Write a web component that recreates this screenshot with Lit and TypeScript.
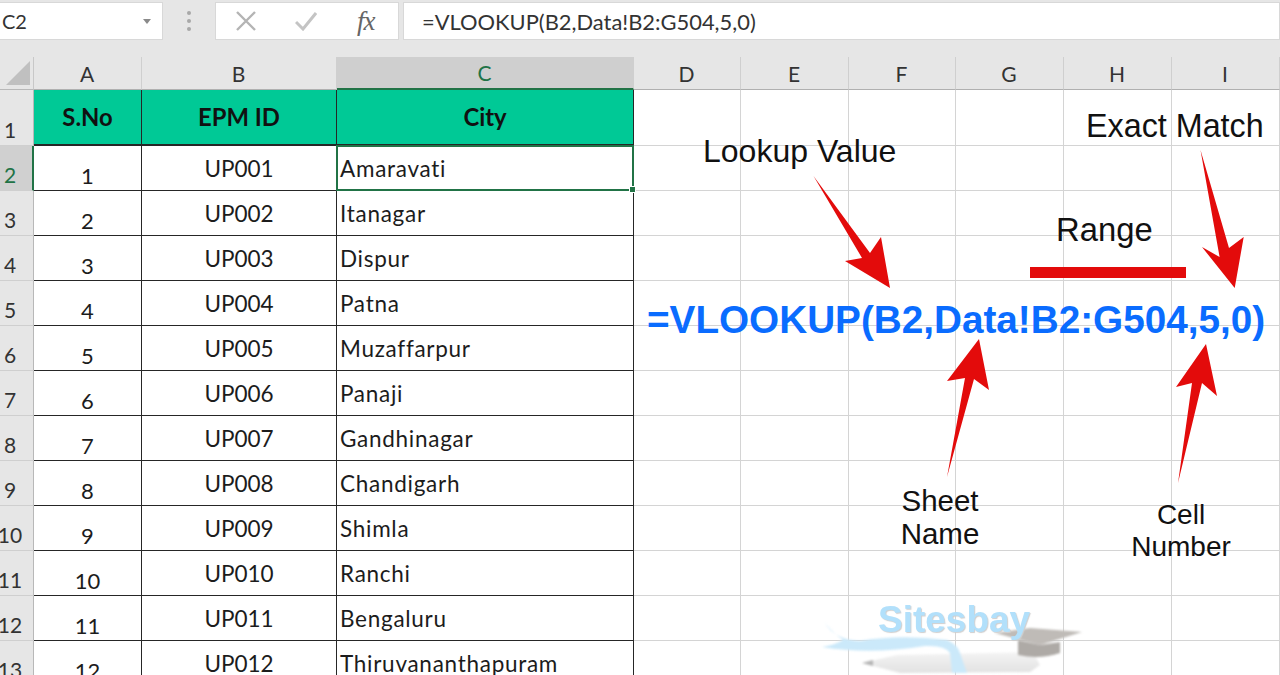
import { LitElement, html, css, svg } from "lit";
import { customElement } from "lit/decorators.js";

const COLS = ["A", "B", "C", "D", "E", "F", "G", "H", "I"];
const CITIES = ["Amaravati", "Itanagar", "Dispur", "Patna", "Muzaffarpur", "Panaji", "Gandhinagar", "Chandigarh", "Shimla", "Ranchi", "Bengaluru", "Thiruvananthapuram"];
const ARROWS = [
  "813.5,176 870,253 881,237 890,288 845,261 862,258",
  "1200.5,150 1229,248 1243.7,237 1234.7,288 1202,247 1219.6,257",
  "947,477 965,378 947,381 979,339 989,390 974,379",
  "1178,483 1192,383 1176,387 1206,344 1217,396 1202,383",
];

@customElement("app-root")
export class AppRoot extends LitElement {
  static styles = css`
    :host { display: block; position: relative; width: 1280px; height: 675px; overflow: hidden; background: #fff; font-family: Lato, "Open Sans", sans-serif; color: #1c1c1c; }
    .bar { display: flex; align-items: center; height: 57px; box-sizing: border-box; padding-bottom: 15px; background: #e6e6e6; }
    .box { height: 38px; box-sizing: border-box; background: #fff; border: 1px solid #d8d8d8; display: flex; align-items: center; }
    .name { width: 164px; margin-left: -1px; padding: 0 11px 0 2px; justify-content: space-between; font-size: 20px; color: #333; }
    .caret { width: 0; height: 0; border: 4px solid transparent; border-top: 5px solid #8a8a8a; border-bottom: 0; }
    .dots { width: 52px; display: flex; flex-direction: column; align-items: center; gap: 4px; }
    .dots i { width: 4px; height: 4px; border-radius: 50%; background: #a8a8a8; }
    .btns { width: 184px; padding-left: 20px; gap: 39px; margin-right: 4px; }
    .btns svg { flex: none; }
    .fx { font: italic 400 27px "Liberation Serif", serif; color: #666; letter-spacing: -1px; margin-left: 1px; }
    .formula { flex: 1; padding-left: 18px; font-size: 21.9px; color: #333; white-space: nowrap; }
    .sheet { display: grid; grid-template-columns: 34px 108px 195px 297px 107px 108px 107px 108px 108px 108px; grid-template-rows: 33px 56px repeat(12, 45px); }
    .corner { background: #e6e6e6; border-right: 1px solid #c8c8c8; border-bottom: 1px solid #b8b8b8; display: flex; align-items: flex-end; justify-content: flex-end; padding: 0 3px 4px 0; }
    .corner svg { display: block; }
    .ch { background: #e6e6e6; border-right: 1px solid #cfcfcf; border-bottom: 1px solid #b0b0b0; display: flex; align-items: center; justify-content: center; padding-right: 1px; font-size: 21px; color: #333; }
    .ch.sel { background: #cfcfcf; color: #217346; border-bottom: 2px solid #217346; }
    .rh { background: #e6e6e6; border-bottom: 1px solid #cfcfcf; border-right: 1px solid #b8b8b8; padding: 0 13px 0 0; display: flex; align-items: flex-end; justify-content: center; font-size: 21px; line-height: 30px; color: #333; }
    .rh.sel { background: #d0d0d0; color: #217346; border-right: 2px solid #217346; padding-right: 12px; }
    .c { box-sizing: border-box; border-right: 1px solid #262626; border-bottom: 1px solid #262626; display: flex; align-items: center; font-size: 22.5px; color: #1c1c1c; white-space: nowrap; }
    .head { background: #00c996; font-weight: 700; justify-content: center; font-size: 23.8px; color: #111; border-bottom-width: 2px; }
    .num { justify-content: center; align-items: flex-end; line-height: 29px; font-size: 22px; }
    .id { justify-content: center; }
    .city { padding: 0 0 0 3px; letter-spacing: 0.72px; }
    .e { border-right: 1px solid #d4d4d4; border-bottom: 1px solid #d4d4d4; }
    .sel-cell { position: absolute; left: 336px; top: 145px; width: 298px; height: 46px; box-sizing: border-box; border: 2px solid #217346; }
    .handle { position: absolute; right: -3px; bottom: -3px; width: 5px; height: 5px; background: #217346; border: 1px solid #fff; box-sizing: content-box; margin: -1px; }
    .overlay { position: absolute; inset: 0; pointer-events: none; font-family: "Liberation Sans", Arial, sans-serif; color: #111; }
    .overlay svg { position: absolute; inset: 0; }
    .t { position: absolute; white-space: nowrap; line-height: 1; }
    .lookup { left: 703px; top: 135px; font-size: 32px; }
    .exact { left: 1086px; top: 110px; font-size: 32.3px; }
    .range { left: 1056px; top: 214px; font-size: 32.8px; }
    .blue { left: 647px; top: 301px; font-size: 38.7px; font-weight: 700; color: #0a6cff; }
    .sheet-name { left: 901px; top: 484px; font-size: 29.5px; line-height: 33px; text-align: center; width: 78px; display: flex; flex-direction: column; align-items: center; white-space: nowrap; }
    .cell-num { left: 1131px; top: 499px; font-size: 28px; line-height: 32px; width: 100px; display: flex; flex-direction: column; align-items: center; }
    .mark { left: 878px; top: 601px; font-size: 37px; font-weight: 700; color: #b2e0fb; text-shadow: 1px 1px 1px #cfcfcf; filter: blur(0.7px); }
  `;

  private rowCells(i: number) {
    const r = i + 2;
    const city = CITIES[i];
    return html`
      <div class="rh ${r === 2 ? "sel" : ""}">${r}</div>
      <div class="c num">${i + 1}</div>
      <div class="c id">UP${String(i + 1).padStart(3, "0")}</div>
      <div class="c city">${city}</div>
      ${COLS.slice(3).map(() => html`<div class="e"></div>`)}
    `;
  }

  private art() {
    return svg`
      <svg width="1280" height="675" viewBox="0 0 1280 675">
        <defs>
          <linearGradient id="pen" x1="0" y1="0" x2="0" y2="1">
            <stop offset="0" stop-color="#f4f4f4" /><stop offset="1" stop-color="#e2e2e2" />
          </linearGradient>
        </defs>
        <g style="filter: blur(1px)">
          <path d="M862 663 L897 655 L1033 652 L1040 665 L1030 672 L900 673 Z" fill="url(#pen)" />
          <path d="M862 663 L873 660 L873 666 Z" fill="#b5b5b5" />
          <path d="M825 623 Q835 640 860 641 Q900 634 947 640 Q958 645 960 653 L967 673 L952 673 L950 653 Q945 645 925 646 Q870 655 822 647 Q835 645 843 640 Q832 632 825 623 Z" fill="#cbe9fa" />
          <path d="M1018 640 L1040 645 L1060 642 L1060 653 Q1040 660 1018 655 Z" fill="#aeaaa6" />
          <path d="M995 633 L1030 628 L1082 632 L1040 645 Z" fill="#bfbbb7" />
        </g>
        <path d="M1030 267 H1186 V278 H1030 Z" fill="#e30b0b" />
        ${ARROWS.map((p) => svg`<polygon points=${p} fill="#e30b0b" />`)}
      </svg>
    `;
  }

  render() {
    return html`
      <div class="bar">
        <div class="box name"><span>C2</span><span class="caret"></span></div>
        <div class="dots"><i></i><i></i><i></i></div>
        <div class="box btns">
          <svg width="20" height="20" viewBox="0 0 20 20"><path d="M1 1 L19 19 M19 1 L1 19" stroke="#b4b4b4" stroke-width="2.4" fill="none" /></svg>
          <svg width="22" height="20" viewBox="0 0 22 20"><path d="M1 11 L8 18 L21 2" stroke="#c4c4c4" stroke-width="3" fill="none" /></svg>
          <span class="fx">fx</span>
        </div>
        <div class="box formula">=VLOOKUP(B2,Data!B2:G504,5,0)</div>
      </div>
      <div class="sheet">
        <div class="corner"><svg width="24" height="24" viewBox="0 0 24 24"><path d="M24 0 V24 H0 Z" fill="#c0c0c0" /></svg></div>
        ${COLS.map((c) => html`<div class="ch ${c === "C" ? "sel" : ""}">${c}</div>`)}
        <div class="rh">1</div>
        <div class="c head">S.No</div>
        <div class="c head">EPM ID</div>
        <div class="c head">City</div>
        ${COLS.slice(3).map(() => html`<div class="e"></div>`)}
        ${CITIES.map((_, i) => this.rowCells(i))}
      </div>
      <div class="sel-cell"><span class="handle"></span></div>
      <div class="overlay">
        ${this.art()}
        <span class="t lookup">Lookup Value</span>
        <span class="t exact">Exact Match</span>
        <span class="t range">Range</span>
        <span class="t blue">=VLOOKUP(B2,Data!B2:G504,5,0)</span>
        <div class="t sheet-name"><span>Sheet</span><span>Name</span></div>
        <div class="t cell-num"><span>Cell</span><span>Number</span></div>
        <span class="t mark">Sitesbay</span>
      </div>
    `;
  }
}
